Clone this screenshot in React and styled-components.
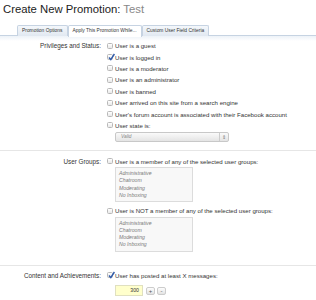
import React from "react";
import styled, { createGlobalStyle } from "styled-components";

const Global = createGlobalStyle`
  body {
    margin: 0;
    background: #fff;
    font-family: "Liberation Sans", Arial, sans-serif;
    color: #333;
  }
`;

const Page = styled.div`
  width: 316px;
  height: 300px;
  overflow: hidden;
`;

const Title = styled.h1`
  margin: 0;
  padding: 3px 0 0 3px;
  font-size: 11.3px;
  line-height: 13px;
  font-weight: normal;
  color: #222;
  span {
    color: #888;
  }
`;

const TabStrip = styled.ul`
  display: flex;
  list-style: none;
  margin: 8px 0 0;
  padding: 0 0 0 17px;
  height: 11px;
  border-bottom: 1px solid #c6d3e2;
  position: relative;
  &:after {
    content: "";
    position: absolute;
    left: 0;
    right: 0;
    top: 12px;
    height: 5px;
    background: linear-gradient(to bottom, #edf2f8, #fff);
  }
`;

const Tab = styled.li`
  font-size: 4.9px;
  line-height: 10px;
  margin-top: 1px;
  padding: 0 4px;
  color: #333;
  border: 1px solid #c6d3e2;
  border-bottom: none;
  border-radius: 2px 2px 0 0;
  background: ${(p) => (p.$active ? "#fff" : "linear-gradient(to bottom, #f4f7fb, #e1e8f1)")};
  position: relative;
  z-index: 1;
  height: ${(p) => (p.$active ? "11px" : "10px")};
  margin-bottom: ${(p) => (p.$active ? "-1px" : "0")};
`;

const Form = styled.div`
  padding-top: 4px;
`;

const Section = styled.div`
  display: flex;
  padding: ${(p) => p.$pad || "0"};
  border-bottom: ${(p) => (p.$divider ? "1px solid #e6e6e6" : "none")};
`;

const Label = styled.div`
  width: 101px;
  flex: none;
  text-align: right;
  font-size: 6.3px;
  line-height: 11.4px;
  color: #333;
  padding-right: 6px;
`;

const Controls = styled.div`
  display: flex;
  flex-direction: column;
`;

const CheckRow = styled.label`
  display: flex;
  align-items: center;
  height: 11.4px;
  font-size: 6.1px;
  color: #333;
  white-space: nowrap;
`;

const Box = styled.span`
  width: 6px;
  height: 6px;
  box-sizing: border-box;
  border: 1px solid #b8b8b8;
  border-radius: 1.5px;
  background: linear-gradient(to bottom, #fff, #e8e8e8);
  margin-right: 2px;
  position: relative;
  flex: none;
  svg {
    position: absolute;
    left: 0;
    top: -2px;
  }
`;

const Indent = styled.div`
  padding-left: 8px;
`;

const Select = styled.div`
  width: 114px;
  height: 10px;
  box-sizing: border-box;
  border: 1px solid #c8c8c8;
  border-radius: 2px;
  background: linear-gradient(to bottom, #fafafa, #e4e4e4);
  display: flex;
  align-items: center;
  font-size: 4.8px;
  font-style: italic;
  color: #888;
  margin-top: 0.5px;
  span {
    flex: 1;
    padding-left: 5px;
  }
  b {
    width: 8px;
    height: 100%;
    border-left: 1px solid #ccc;
    font-weight: normal;
    font-style: normal;
    font-size: 5px;
    line-height: 8px;
    text-align: center;
    color: #777;
  }
`;

const ListBox = styled.div`
  width: 78px;
  box-sizing: border-box;
  border: 1px solid #dcdcdc;
  background: #f8f8f8;
  padding: 2px 3px 2px;
  font-size: 5.2px;
  line-height: 7.3px;
  font-style: italic;
  color: #7a7a7a;
  margin-bottom: 3px;
`;

const Spinner = styled.div`
  display: flex;
  align-items: center;
  gap: 2px;
  margin-top: 4px;
`;

const NumberInput = styled.div`
  width: 28px;
  height: 11px;
  box-sizing: border-box;
  border: 1px solid #e0e0c0;
  background: #ffffcc;
  font-size: 5.2px;
  line-height: 9px;
  text-align: right;
  padding-right: 3px;
  color: #333;
  margin-right: 1px;
`;

const SpinButton = styled.div`
  width: 9px;
  height: 8px;
  box-sizing: border-box;
  border: 1px solid #ccc;
  border-radius: 2px;
  background: linear-gradient(to bottom, #fdfdfd, #e3e3e3);
  font-size: 6px;
  line-height: 6px;
  text-align: center;
  color: #555;
`;

function Check({ checked, children }) {
  return (
    <CheckRow>
      <Box>
        {checked && (
          <svg width="7" height="8" viewBox="0 0 7 8">
            <path d="M1 4.5 L2.8 6.6 L6.4 1" fill="none" stroke="#2f5aa8" strokeWidth="1.4" />
          </svg>
        )}
      </Box>
      {children}
    </CheckRow>
  );
}

const groups = ["Administrative", "Chatroom", "Moderating", "No Inboxing"];

export default function App() {
  return (
    <Page>
      <Global />
      <Title>
        Create New Promotion: <span>Test</span>
      </Title>
      <TabStrip>
        <Tab>Promotion Options</Tab>
        <Tab $active>Apply This Promotion While...</Tab>
        <Tab>Custom User Field Criteria</Tab>
      </TabStrip>
      <Form>
        <Section $divider $pad="0 0 8px">
          <Label>Privileges and Status:</Label>
          <Controls>
            <Check>User is a guest</Check>
            <Check checked>User is logged in</Check>
            <Check>User is a moderator</Check>
            <Check>User is an administrator</Check>
            <Check>User is banned</Check>
            <Check>User arrived on this site from a search engine</Check>
            <Check>User's forum account is associated with their Facebook account</Check>
            <Check>User state is:</Check>
            <Indent>
              <Select>
                <span>Valid</span>
                <b>⇕</b>
              </Select>
            </Indent>
          </Controls>
        </Section>
        <Section $divider $pad="5px 0 10px">
          <Label>User Groups:</Label>
          <Controls>
            <Check>User is a member of any of the selected user groups:</Check>
            <Indent>
              <ListBox>
                {groups.map((g) => (
                  <div key={g}>{g}</div>
                ))}
              </ListBox>
            </Indent>
            <Check>User is NOT a member of any of the selected user groups:</Check>
            <Indent>
              <ListBox>
                {groups.map((g) => (
                  <div key={g}>{g}</div>
                ))}
              </ListBox>
            </Indent>
          </Controls>
        </Section>
        <Section $pad="4px 0 0">
          <Label>Content and Achievements:</Label>
          <Controls>
            <Check checked>User has posted at least X messages:</Check>
            <Indent>
              <Spinner>
                <NumberInput>300</NumberInput>
                <SpinButton>+</SpinButton>
                <SpinButton>-</SpinButton>
              </Spinner>
            </Indent>
          </Controls>
        </Section>
      </Form>
    </Page>
  );
}
